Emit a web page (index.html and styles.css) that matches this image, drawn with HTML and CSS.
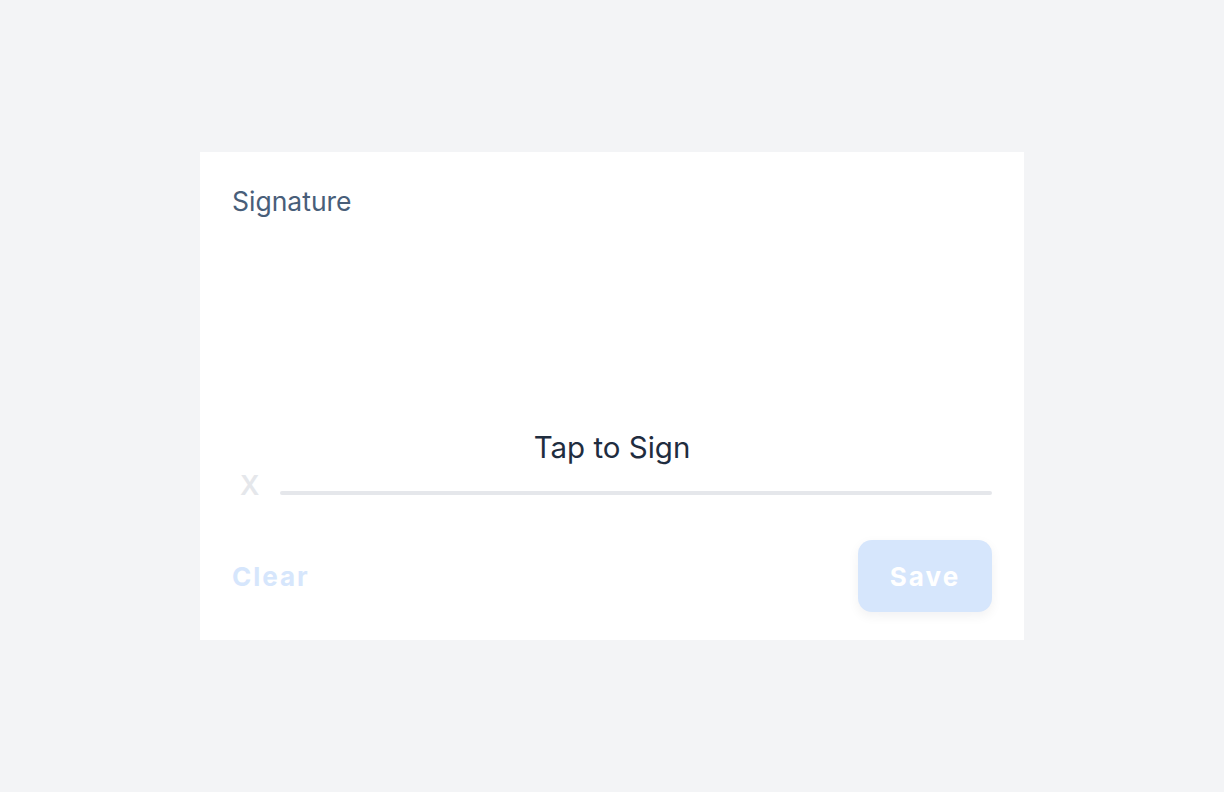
FILE: index.html
```html
<!DOCTYPE html>
<html lang="en">
<head>
<meta charset="utf-8">
<title>Signature</title>
<link rel="stylesheet" href="styles.css">
</head>
<body>
<main class="page">
  <section class="card">
    <div class="label">Signature</div>
    <div class="pad">
      <div class="hint">Tap to Sign</div>
      <div class="sign-row">
        <span class="mark">X</span>
        <span class="line"></span>
      </div>
    </div>
    <div class="actions">
      <button class="btn-clear" type="button">Clear</button>
      <button class="btn-save" type="button">Save</button>
    </div>
  </section>
</main>
</body>
</html>
```

FILE: styles.css
```css
* { box-sizing: border-box; }
html, body { margin: 0; padding: 0; }
body {
  background: #f3f4f6;
  font-family: Inter, "Noto Sans", "Liberation Sans", sans-serif;
  width: 1224px;
  height: 792px;
}
.page {
  display: flex;
  justify-content: center;
  padding-top: 152px;
}
.card {
  width: 824px;
  height: 488px;
  background: #ffffff;
  padding: 32px 32px 28px;
  display: flex;
  flex-direction: column;
}
.label {
  font-size: 26.5px;
  line-height: 34px;
  color: #485e79;
}
.pad {
  flex: 1;
  display: flex;
  flex-direction: column;
  justify-content: flex-end;
  padding-bottom: 42px;
}
.hint {
  text-align: center;
  font-size: 29.5px;
  line-height: 40px;
  color: #1f2d3f;
  margin-bottom: 7px;
}
.sign-row {
  display: flex;
  align-items: flex-end;
}
.mark {
  width: 48px;
  padding-left: 8px;
  font-size: 27px;
  font-weight: 600;
  line-height: 24px;
  color: #e5e7eb;
}
.line {
  flex: 1;
  height: 4px;
  background: #e5e7eb;
  border-radius: 2px;
  margin-bottom: 3px;
}
.actions {
  display: flex;
  justify-content: space-between;
  align-items: center;
}
.btn-clear, .btn-save {
  font-family: inherit;
  font-weight: 700;
  font-size: 26px;
  letter-spacing: 2px;
  border: none;
  cursor: pointer;
}
.btn-clear {
  background: none;
  padding: 0;
  color: #d6e6fc;
}
.btn-save {
  height: 72px;
  width: 134px;
  border-radius: 14px;
  background: #d6e6fc;
  color: #ffffff;
  box-shadow: 0 4px 12px rgba(15, 23, 42, 0.06);
}
```
